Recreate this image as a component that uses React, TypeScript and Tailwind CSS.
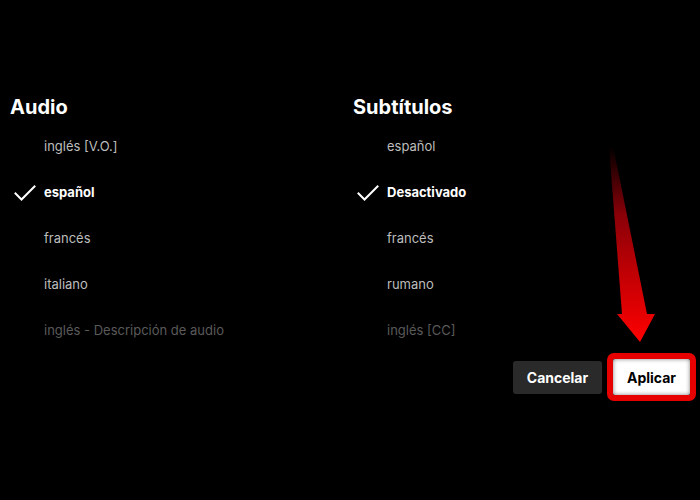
import React from "react";

const Check = () => (
  <svg width="22" height="16" viewBox="0 0 22 16" fill="none">
    <path d="M1.5 8.5 L7.5 14.5 L20.5 1.5" stroke="white" strokeWidth="2" strokeLinecap="square" />
  </svg>
);

type Item = { label: string; selected?: boolean; dim?: boolean };

const Column = ({ title, items }: { title: string; items: Item[] }) => (
  <div className="flex flex-col">
    <div className="text-[20px] leading-[24px] font-bold text-white">{title}</div>
    <div className="mt-[5px] flex flex-col">
      {items.map((it) => (
        <div key={it.label} className="h-[46px] flex items-center">
          <div className="w-[34px] flex items-center pl-[4px]">{it.selected ? <Check /> : null}</div>
          <div
            className={
              it.selected
                ? "text-[13px] font-bold text-white"
                : it.dim
                ? "text-[13px] text-[#5a5a5a]"
                : "text-[13px] text-[#bdbdbd]"
            }
          >
            {it.label}
          </div>
        </div>
      ))}
    </div>
  </div>
);

export default function App() {
  return (
    <div
      className="relative w-[700px] h-[500px] bg-black overflow-hidden"
      style={{ fontFamily: "Inter, 'Noto Sans', sans-serif" }}
    >
      <div className="flex pt-[95px] pl-[10px]">
        <div className="w-[343px]">
          <Column
            title="Audio"
            items={[
              { label: "inglés [V.O.]" },
              { label: "español", selected: true },
              { label: "francés" },
              { label: "italiano" },
              { label: "inglés - Descripción de audio", dim: true },
            ]}
          />
        </div>
        <div className="flex-1 flex flex-col pr-[4px]">
          <Column
            title="Subtítulos"
            items={[
              { label: "español" },
              { label: "Desactivado", selected: true },
              { label: "francés" },
              { label: "rumano" },
              { label: "inglés [CC]", dim: true },
            ]}
          />
          <div className="-mt-[1px] flex justify-end items-center gap-[5px]">
            <div className="w-[89px] h-[33px] bg-[#2a2a2a] rounded-[3px] flex items-center justify-center text-white font-bold text-[14px]">
              Cancelar
            </div>
            <div className="border-[6px] border-[#e60000] rounded-[7px] w-[89px] h-[48px]">
              <div className="w-full h-full bg-white rounded-[2px] flex items-center justify-center text-black font-bold text-[14px] shadow-[inset_0_0_4px_rgba(0,0,0,0.5)]">
                Aplicar
              </div>
            </div>
          </div>
        </div>
      </div>
      <svg className="absolute left-0 top-0" width="700" height="500" viewBox="0 0 700 500">
        <defs>
          <linearGradient id="ag" x1="0" y1="146" x2="0" y2="342" gradientUnits="userSpaceOnUse">
            <stop offset="0" stopColor="#000000" />
            <stop offset="0.35" stopColor="#8a0008" />
            <stop offset="1" stopColor="#ff0000" />
          </linearGradient>
        </defs>
        <polygon points="609,146 622,314 617,314 640,342 655,314 647,314 613,146" fill="url(#ag)" />
      </svg>
    </div>
  );
}
